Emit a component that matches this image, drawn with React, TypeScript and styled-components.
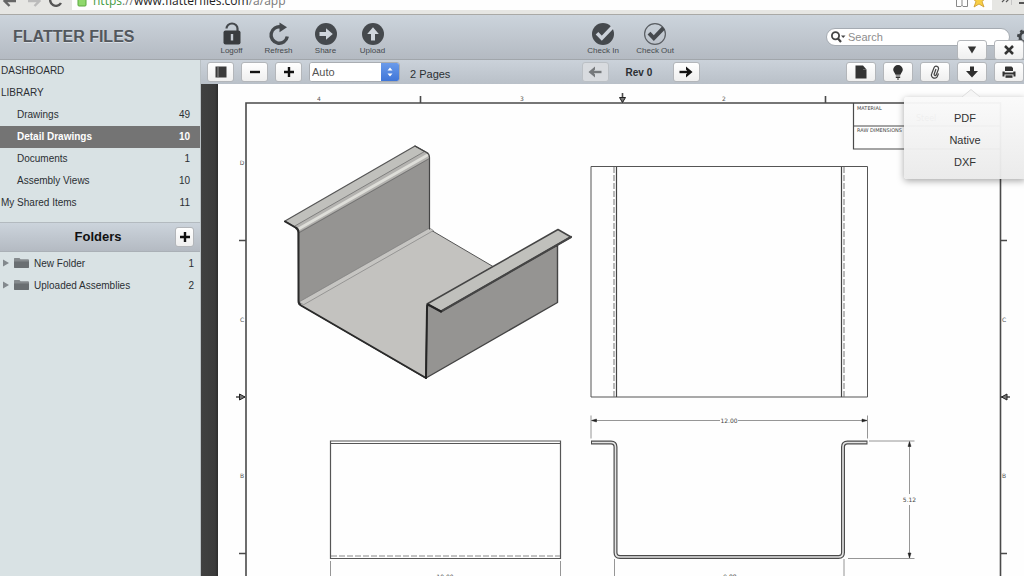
import React from "react";
import styled, { createGlobalStyle, css } from "styled-components";

const GlobalStyle = createGlobalStyle`
  * { box-sizing: border-box; }
  body {
    margin: 0;
    overflow: hidden;
    font-family: "Liberation Sans", Arial, sans-serif;
    font-size: 10px;
    color: #2b2f33;
    background: #fff;
  }
  button, input, select { font-family: inherit; margin: 0; }
`;

const barGradient = "linear-gradient(#ccd4dc, #b4bac2)";

const Page = styled.div`
  display: flex;
  flex-direction: column;
  height: 100vh;
  overflow: hidden;
`;

/* Browser strip */
const BrowserBar = styled.div`
  display: flex;
  align-items: flex-end;
  height: 15px;
  flex: none;
  overflow: hidden;
  padding-bottom: 4px;
  background: #e6e6e3;
  border-bottom: 1px solid #a9a9a6;
`;

const NavIcons = styled.div`
  display: flex;
  width: 72px;
  flex: none;
`;

const AddressBar = styled.div`
  display: flex;
  align-items: center;
  flex: 1;
  height: 24px;
  padding: 6px 3px 0 5px;
  background: #fefefe;
`;

const Address = styled.span`
  flex: 1;
  padding-left: 6px;
  font-family: "Open Sans", sans-serif;
  font-size: 12px;
  line-height: 16px;
  white-space: nowrap;
  color: #777;
  em { font-style: normal; color: #3f9a3f; }
  b { font-weight: 500; color: #222; }
`;

/* Application header */
const Header = styled.header`
  position: relative;
  z-index: 2;
  display: flex;
  align-items: center;
  flex: none;
  height: 45px;
  background: ${barGradient};
  border-bottom: 1px solid #a1a6ab;
`;

const Brand = styled.h1`
  width: 208px;
  flex: none;
  margin: 0;
  padding-left: 13px;
  font-size: 16px;
  line-height: 20px;
  color: #53575c;
  text-shadow: 0 1px 0 #d9dfe5;
`;

const ActionGroup = styled.div`
  display: flex;
  flex: none;
`;

const Spacer = styled.div<{ $grow: number }>`
  flex: ${(p) => p.$grow} 1 0;
`;

const Action = styled.button<{ $wide?: boolean }>`
  display: flex;
  flex-direction: column;
  align-items: center;
  width: ${(p) => (p.$wide ? 52 : 47)}px;
  padding: 4px 0 0;
  border: 0;
  background: none;
  color: #45494d;
  font-size: 8px;
  line-height: 10px;
  white-space: nowrap;
  svg { display: block; }
`;

const SearchField = styled.label`
  display: flex;
  align-items: center;
  flex: none;
  width: 184px;
  height: 18px;
  margin-right: 6px;
  padding-left: 4px;
  background: #fff;
  border: 1px solid #a5abb2;
  border-radius: 9px;
  input {
    flex: 1;
    min-width: 0;
    padding: 0 0 0 2px;
    border: 0;
    outline: 0;
    background: none;
    font-size: 11px;
    line-height: 14px;
    color: #333;
  }
  input::placeholder { color: #8d8d8d; opacity: 1; }
`;

const GearButton = styled.button`
  flex: none;
  width: 8px;
  height: 18px;
  padding: 0;
  border: 0;
  overflow: hidden;
  background: none;
  svg { display: block; }
`;

const buttonFace = css`
  display: flex;
  align-items: center;
  justify-content: center;
  flex: none;
  height: 20px;
  padding: 0;
  border: 1px solid #b3b6ba;
  border-radius: 3px;
  background: linear-gradient(#ffffff, #efefef);
  color: #111;
`;

const ToolButton = styled.button<{ $wide?: boolean; $faded?: boolean }>`
  ${buttonFace}
  width: ${(p) => (p.$wide ? 30 : 27)}px;
  svg { display: block; }
  ${(p) => p.$faded && css`
    background: #d8dbdf;
    border-color: #bbc0c5;
    color: #76797c;
  `}
`;

/* Window controls that hang over the lower edge of the header */
const FloatingControls = styled.div`
  position: absolute;
  right: 0;
  bottom: -1px;
  display: flex;
  gap: 7px;
`;

/* Body */
const Body = styled.div`
  display: flex;
  flex: 1;
  min-height: 0;
`;

const Sidebar = styled.nav`
  width: 201px;
  flex: none;
  background: #d9e2e4;
  border-right: 1px solid #b9c0c4;
`;

const List = styled.ul`
  margin: 0;
  padding: 0;
  list-style: none;
`;

const Entry = styled.a<{ $nested?: boolean; $active?: boolean }>`
  display: flex;
  align-items: center;
  justify-content: space-between;
  height: 22px;
  padding: 0 10px 2px ${(p) => (p.$nested ? 17 : 1)}px;
  color: #2b2f33;
  text-decoration: none;
  ${(p) => p.$active && css`
    background: #747474;
    color: #fff;
    font-weight: 700;
  `}
`;

const FolderHead = styled.div`
  display: grid;
  grid-template-columns: 1fr auto 1fr;
  align-items: center;
  height: 30px;
  margin-top: 8px;
  padding: 0 6px 0 2px;
  background: ${barGradient};
  border-top: 1px solid #b3babf;
  border-bottom: 1px solid #aab0b6;
  h2 {
    grid-column: 2;
    margin: 0;
    font-size: 13px;
    line-height: 16px;
    color: #111;
  }
  button {
    ${buttonFace}
    justify-self: end;
    width: 19px;
  }
`;

const FolderEntry = styled.a`
  display: flex;
  align-items: center;
  height: 22px;
  padding: 0 6px 0 2px;
  color: #2b2f33;
  text-decoration: none;
  svg { margin-right: 5px; }
  span { flex: 1; }
`;

const Main = styled.main`
  display: flex;
  flex-direction: column;
  flex: 1;
  min-width: 0;
`;

const Toolbar = styled.div`
  position: relative;
  z-index: 1;
  display: flex;
  align-items: center;
  flex: none;
  height: 24px;
  padding-left: 6px;
  background: linear-gradient(#cbd2da, #b9c0c8);
`;

const ZoomGroup = styled.div`
  display: flex;
  gap: 7px;
  align-items: center;
`;

const PageCount = styled.span`
  padding: 3px 0 0 3px;
  font-size: 11px;
  line-height: 14px;
`;

const Revision = styled.strong`
  width: 64px;
  text-align: center;
  line-height: 14px;
  padding: 2px 4px 0 0;
`;

const ZoomSelect = styled.div`
  display: flex;
  width: 91px;
  height: 20px;
  border: 1px solid #a9adb2;
  border-radius: 3px;
  overflow: hidden;
  background: #fff;
  select {
    flex: 1;
    min-width: 0;
    padding: 0 0 0 2px;
    border: 0;
    appearance: none;
    background: #fff;
    font-size: 11px;
    color: #555;
  }
  svg { flex: none; background: linear-gradient(#6b9bea, #3f76d8); }
`;

const Viewer = styled.div`
  flex: 1;
  min-height: 0;
  padding-left: 17px;
  overflow: hidden;
  background: linear-gradient(90deg, #404040 0, #3b3b3b 14px, #2c2c2c 17px);
`;

const Sheet = styled.svg`
  display: block;
  width: 100%;
  min-height: 100%;
  background: #fefefe;
  font-family: "DejaVu Sans", sans-serif;
`;

const ExportMenu = styled.div`
  position: absolute;
  top: 37px;
  right: -2px;
  width: 122px;
  padding: 10px 0 6px;
  border-radius: 3px;
  background: linear-gradient(rgba(250, 250, 250, 0.96), rgba(234, 234, 234, 0.96));
  box-shadow: 0 2px 7px rgba(0, 0, 0, 0.35);
  svg { position: absolute; top: -8px; left: 58px; }
  a {
    display: block;
    font-size: 11px;
    line-height: 22px;
    text-align: center;
    color: #333;
    text-decoration: none;
  }
`;

const LockIcon = () => (
  <svg width="24" height="24" viewBox="0 0 24 24">
    <path d="M6.500 6.500a5.500 5 0 0 1 11 0V9" fill="none" stroke="#45494d" strokeWidth="2.200" />
    <rect x="3.500" y="8.500" width="17" height="14" rx="2" fill="#393c3f" />
    <path d="M12 12v6.500" stroke="#c4cad2" strokeWidth="2.400" />
  </svg>
);

const RefreshIcon = () => (
  <svg width="24" height="24" viewBox="0 0 24 24">
    <path d="M20.300 14.500A8.200 8.200 0 1 1 14 5" fill="none" stroke="#45494d" strokeWidth="3.400" />
    <path d="M12.500 0.500L20 5.200l-7.500 5z" fill="#45494d" />
  </svg>
);

const DiscArrowIcon = ({ up }: { up?: boolean }) => (
  <svg width="24" height="24" viewBox="0 0 24 24">
    <circle cx="12" cy="12" r="11" fill="#45494d" />
    <path
      d="M5.500 10v4h6.500v3.800l6.800-5.800L12 6.200V10z"
      fill="#d0d6dd"
      transform={up ? "rotate(-90 12 12)" : undefined}
    />
  </svg>
);

const CheckInIcon = () => (
  <svg width="24" height="24" viewBox="0 0 24 24">
    <circle cx="12" cy="12" r="11" fill="#45494d" />
    <path d="M6 11.200l4.800 5L21.500 5" fill="none" stroke="#ccd2da" strokeWidth="3.600" />
  </svg>
);

const CheckOutIcon = () => (
  <svg width="24" height="24" viewBox="0 0 24 24">
    <circle cx="12" cy="12" r="10.400" fill="none" stroke="#5a5e63" strokeWidth="1.200" />
    <path d="M6 11.200l4.800 5L20.500 6" fill="none" stroke="#45494d" strokeWidth="4" />
  </svg>
);

const GearIcon = () => (
  <svg width="16" height="18" viewBox="0 0 16 18">
    <circle cx="9" cy="9" r="5" fill="none" stroke="#404448" strokeWidth="3" />
    <circle cx="9" cy="9" r="7" fill="none" stroke="#404448" strokeWidth="2" strokeDasharray="2.750 2.750" />
  </svg>
);

const FolderIcon = () => (
  <svg width="27" height="12" viewBox="0 0 27 12">
    <path d="M1 2.500l6 3.500-6 3.500z" fill="#83898d" />
    <path d="M12.500 1h5l1 1.200H26a1 1 0 0 1 1 1V10a1 1 0 0 1-1 1H13a1 1 0 0 1-1-1V1.500z" fill="#858a8d" />
    <path d="M12 4.500h15V10a1 1 0 0 1-1 1H13a1 1 0 0 1-1-1z" fill="#6a6f72" />
  </svg>
);

const ArrowIcon = ({ back }: { back?: boolean }) => (
  <svg width="14" height="12" viewBox="0 0 14 12">
    <path
      d="M0.500 6H9"
      stroke="currentColor"
      strokeWidth="2.400"
      transform={back ? "rotate(180 7 6)" : undefined}
    />
    <path
      d="M7 0.500l6.500 5.500L7 11.500V8.500L9 6 7 3.500z"
      fill="currentColor"
      transform={back ? "rotate(180 7 6)" : undefined}
    />
  </svg>
);

const PlusIcon = () => (
  <svg width="10" height="10" viewBox="0 0 10 10">
    <path d="M0 5h10M5 0v10" stroke="#111" strokeWidth="2.400" />
  </svg>
);

const MinusIcon = () => (
  <svg width="10" height="10" viewBox="0 0 10 10">
    <path d="M0 5h10" stroke="#111" strokeWidth="2.400" />
  </svg>
);

const PanelIcon = () => (
  <svg width="12" height="12" viewBox="0 0 12 12">
    <rect x="0.500" y="0.500" width="11" height="11" fill="#3b3b3b" />
    <path d="M3 1v10" stroke="#aaa" strokeWidth="0.800" />
  </svg>
);

const FileIcon = () => (
  <svg width="12" height="14" viewBox="0 0 12 14">
    <path d="M0.500 0.500h7.500v4h3.500v9H0.500z" fill="#333" />
    <path d="M8 0.500L11.500 4.500H8z" fill="#333" />
  </svg>
);

const BulbIcon = () => (
  <svg width="12" height="16" viewBox="0 0 12 16">
    <path d="M6 1a4.800 4.800 0 0 1 4.800 4.800c0 2-1.800 3-2.300 5h-5c-.5-2-2.300-3-2.300-5A4.800 4.800 0 0 1 6 1z" fill="#2f2f2f" />
    <path d="M3.800 12h4.400M3.800 13.500h4.400M5 15h2" stroke="#333" strokeWidth="1" />
  </svg>
);

const ClipIcon = () => (
  <svg width="12" height="14" viewBox="0 0 12 14">
    <path
      d="M7 4L5.200 9a1.100 1.100 0 0 0 2 .9L9.400 4.200A2.300 2.300 0 0 0 5.100 2.600L2.700 8.800a3 3 0 0 0 5.600 2.600l1.200-2.800"
      fill="none"
      stroke="#444"
      strokeWidth="1.200"
    />
  </svg>
);

const DownIcon = () => (
  <svg width="12" height="12" viewBox="0 0 12 12">
    <path d="M4 0.500h4V5h4l-6 6.500L0 5h4z" fill="#2f2f2f" />
  </svg>
);

const PrintIcon = () => (
  <svg width="14" height="12" viewBox="0 0 14 12">
    <path d="M3.500 0.500h6l1.500 1.500v3h-8V1z" fill="#333" />
    <path d="M0.500 5.500h2.200v1h8.600v-1h2.200v5h-2V8.500h-9v2h-2z" fill="#333" />
    <path d="M3.500 9.300h7v2.500h-7z" fill="#333" />
  </svg>
);

const CaretIcon = () => (
  <svg width="10" height="8" viewBox="0 0 10 8">
    <path d="M0.800 0.500h8.400L5 7.500z" fill="#333" />
  </svg>
);

const CloseIcon = () => (
  <svg width="10" height="10" viewBox="0 0 10 10">
    <path d="M1 1l8 8M9 1L1 9" stroke="#333" strokeWidth="2.500" />
  </svg>
);

const libraryItems = [
  { name: "DASHBOARD" },
  { name: "LIBRARY" },
  { name: "Drawings", count: 49, nested: true },
  { name: "Detail Drawings", count: 10, nested: true, active: true },
  { name: "Documents", count: 1, nested: true },
  { name: "Assembly Views", count: 10, nested: true },
  { name: "My Shared Items", count: 11 },
];

const folders = [
  { name: "New Folder", count: 1 },
  { name: "Uploaded Assemblies", count: 2 },
];

const DrawingSheet = () => (
  <Sheet viewBox="218 84 806 492" preserveAspectRatio="xMinYMin meet" role="img" aria-label="Detail drawing">
    {/* Border with zone marks */}
    <g fill="none" stroke="#4a4a4a" strokeWidth="1.600">
      <path d="M246 580V103H1000.500V580" />
      <path d="M420.500 96v7M825.500 96v7M239 240.500h7M239 553.500h7M1001 240.500h6M1001 553.500h6" />
      <path d="M622.500 93v9M236 397h9M1001 397h9" />
      <path d="M853.500 103v46H1000M853.500 126H1000" strokeWidth="1.200" />
    </g>
    <g fill="#777" stroke="#222" strokeWidth="1">
      <path d="M619.500 97.500h6l-3 5zM239.500 394l5.500 3-5.500 3zM1007 394l-5.500 3 5.500 3z" />
    </g>
    <g fill="#555" fontSize="6" textAnchor="middle">
      <text x="319" y="101">4</text>
      <text x="522" y="101">3</text>
      <text x="724" y="101">2</text>
      <text x="242" y="165">D</text>
      <text x="242" y="322">C</text>
      <text x="242" y="478">B</text>
      <text x="1004" y="322">C</text>
      <text x="1004" y="478">B</text>
    </g>
    <g fill="#444" fontSize="5">
      <text x="857" y="110">MATERIAL</text>
      <text x="857" y="132">RAW DIMENSIONS</text>
      <text x="916" y="121" fontSize="8">Steel</text>
    </g>

    {/* Isometric view */}
    <g strokeLinejoin="round" strokeLinecap="round">
      <path d="M299 304L430 229.500 493 266.500 427 305 426 378z" fill="#c3c2bf" stroke="#555" strokeWidth="1" />
      <path d="M298.500 231L429.500 157V229.500L299 303z" fill="#959492" stroke="#555" strokeWidth="1" />
      <path d="M299 302L429.500 228l4 2.500L304 304.500z" fill="#c6c5c2" stroke="#777" strokeWidth="0.600" />
      <path d="M285 221L415 146l13.500 7.500L298 229z" fill="#c0c0bc" stroke="#555" strokeWidth="1.200" />
      <path d="M294 226.500L424.500 151.500q5 .5 5 6.500L299.500 231.500q-1-4-5.500-5z" fill="#b4b3b0" />
      <path d="M297.500 229.500L428.500 154.500" stroke="#deded9" strokeWidth="2.600" />
      <path d="M294 226.500L424.500 151.500M299.500 232.500L429.500 158.500" stroke="#666" strokeWidth="0.700" />
      <path d="M415 146l11.500 6.500q3 1.500 3 5V229" fill="none" stroke="#444" strokeWidth="1.200" />
      <path d="M285 221.500l10.500 6q3 1.500 3 5V301q0 3 2.500 4.500L426 378" fill="none" stroke="#2a2a2a" strokeWidth="2" />
      <path d="M427 305L557.500 245V302.500L426 378z" fill="#959492" stroke="#444" strokeWidth="1.400" />
      <path d="M427 304L558 229.500l13 7.500L441 311.500z" fill="#c0c0bc" stroke="#444" strokeWidth="1.500" />
      <path d="M441 311.500L571 237" stroke="#444" strokeWidth="2.200" />
      <path d="M441 311.500l-13-7q-1 1-1 4L426 378" fill="none" stroke="#252525" strokeWidth="2" />
    </g>

    {/* Top view */}
    <g fill="none" stroke="#555" strokeWidth="1">
      <path d="M591 166.500H867.500V397H591z" />
      <path d="M616.500 167v230M841.500 167v230" stroke="#444" strokeWidth="1.200" />
      <path d="M614 167v230M844 167v230" stroke="#777" strokeDasharray="6 2" />
    </g>

    {/* Side view */}
    <g fill="none" stroke="#555" strokeWidth="1.200">
      <path d="M330.500 441H560.500V558.500H330.500zM330.500 443.500H560.500" />
      <path d="M331 556H560" stroke="#888" strokeWidth="1" strokeDasharray="6 2" />
    </g>

    {/* Profile view */}
    <path
      d="M591 442.500H611q4.500 0 4.500 4.500V552.500q0 4.500 4.500 4.500H838.500q4.500 0 4.500-4.500V447q0-4.500 4.500-4.500H867.500"
      fill="none"
      stroke="#4c4c4c"
      strokeWidth="4"
    />
    <path
      d="M592 442.500H611q4.500 0 4.500 4.500V552.500q0 4.500 4.500 4.500H838.500q4.500 0 4.500-4.500V447q0-4.500 4.500-4.500H866.500"
      fill="none"
      stroke="#e4e4e4"
      strokeWidth="1.600"
    />

    {/* Dimensions */}
    <g fill="none" stroke="#8a8a8a" strokeWidth="0.900">
      <path d="M591 415.500v23M867.500 415.500v23M592 420.500H720M738 420.500H867" />
      <path d="M869 441H914.500M848 558.500H914.500M909.500 442V494M909.500 505V558" />
      <path d="M614.500 559v20M844 559v20M330.500 561v20M560.500 561v20" />
    </g>
    <path
      d="M591.500 420.500l5-1.500v3zM867 420.500l-5-1.500v3zM909.500 441.500l-1.500 5h3zM909.500 558l-1.500-5h3z"
      fill="#222"
      stroke="#222"
      strokeWidth="0.500"
    />
    <g fill="#444" fontSize="6" textAnchor="middle">
      <text x="729" y="423">12.00</text>
      <text x="909.500" y="502">5.12</text>
      <text x="445" y="579">10.00</text>
      <text x="730" y="579">9.88</text>
    </g>
  </Sheet>
);

export default function App() {
  return (
    <Page>
      <GlobalStyle />
      <BrowserBar>
        <NavIcons>
          <svg width="72" height="11" viewBox="0 0 72 11" fill="none">
            <path d="M4 2H16M10-4L4.500 2l5 5" stroke="#666" strokeWidth="2.400" />
            <path d="M28 2H40M34-4l5.500 6-5 5" stroke="#bbb" strokeWidth="2.400" />
            <path d="M51-2a5.500 5.500 0 0 0 10 6" stroke="#555" strokeWidth="2.400" />
          </svg>
        </NavIcons>
        <AddressBar>
          <svg width="10" height="20" viewBox="0 0 10 20">
            <rect x="1" y="5" width="8" height="10" rx="1" fill="#8fd86c" stroke="#58a83c" />
          </svg>
          <Address>
            <em>https</em>://<b>www.flatterfiles.com</b>/a/app
          </Address>
          <svg width="34" height="20" viewBox="0 0 34 20">
            <path d="M1.500 3v12.500h4.500l1-1 1 1h4.500V3M7 3v12" fill="none" stroke="#888" />
            <path d="M24 2l2 5h5l-4 3.500 2 5.500-5-3-5 3 2-5.500L17 7h5z" fill="#f8cf45" stroke="#c9972b" strokeWidth="0.800" />
          </svg>
        </AddressBar>
        <svg width="32" height="11" viewBox="0 0 32 11">
          <path d="M10-2l2.500 2.500L10 3M14-2l2.500 2.500L14 3" fill="none" stroke="#555" strokeWidth="1.200" />
          <path d="M19.500 0v6" stroke="#c6c6c6" />
          <path d="M27 0h8M27 4h8" stroke="#555" strokeWidth="2" />
        </svg>
      </BrowserBar>

      <Header>
        <Brand>FLATTER FILES</Brand>
        <ActionGroup>
          <Action><LockIcon />Logoff</Action>
          <Action><RefreshIcon />Refresh</Action>
          <Action><DiscArrowIcon />Share</Action>
          <Action><DiscArrowIcon up />Upload</Action>
        </ActionGroup>
        <Spacer $grow={5} />
        <ActionGroup>
          <Action $wide><CheckInIcon />Check In</Action>
          <Action $wide><CheckOutIcon />Check Out</Action>
        </ActionGroup>
        <Spacer $grow={4} />
        <SearchField>
          <svg width="15" height="12" viewBox="0 0 15 12">
            <circle cx="4.500" cy="4.800" r="3.600" fill="none" stroke="#444" strokeWidth="1.800" />
            <path d="M7 7.500l3 3.500" stroke="#444" strokeWidth="2.200" />
            <path d="M10 4.500h4.500L12.200 7z" fill="#444" />
          </svg>
          <input type="search" placeholder="Search" aria-label="Search" />
        </SearchField>
        <GearButton aria-label="Settings"><GearIcon /></GearButton>
        <FloatingControls>
          <ToolButton $wide aria-label="Show menu"><CaretIcon /></ToolButton>
          <ToolButton $wide aria-label="Close"><CloseIcon /></ToolButton>
        </FloatingControls>
      </Header>

      <Body>
        <Sidebar>
          <List>
            {libraryItems.map((item) => (
              <li key={item.name}>
                <Entry href="#" $nested={item.nested} $active={item.active}>
                  <span>{item.name}</span>
                  <span>{item.count}</span>
                </Entry>
              </li>
            ))}
          </List>
          <FolderHead>
            <h2>Folders</h2>
            <button aria-label="Add folder"><PlusIcon /></button>
          </FolderHead>
          <List>
            {folders.map((folder) => (
              <li key={folder.name}>
                <FolderEntry href="#">
                  <FolderIcon />
                  <span>{folder.name}</span>
                  {folder.count}
                </FolderEntry>
              </li>
            ))}
          </List>
        </Sidebar>

        <Main>
          <Toolbar>
            <ZoomGroup>
              <ToolButton aria-label="Toggle sidebar"><PanelIcon /></ToolButton>
              <ToolButton aria-label="Zoom out"><MinusIcon /></ToolButton>
              <ToolButton aria-label="Zoom in"><PlusIcon /></ToolButton>
              <ZoomSelect>
                <select aria-label="Zoom level" defaultValue="Auto">
                  <option>Auto</option>
                </select>
                <svg width="18" height="18" viewBox="0 0 18 18">
                  <path d="M6.500 7.500L9 4.500l2.500 3zM6.500 10.500L9 13.500l2.500-3z" fill="#fff" />
                </svg>
              </ZoomSelect>
              <PageCount>2 Pages</PageCount>
            </ZoomGroup>
            <Spacer $grow={9} />
            <ToolButton $faded aria-label="Previous revision"><ArrowIcon back /></ToolButton>
            <Revision>Rev 0</Revision>
            <ToolButton aria-label="Next revision"><ArrowIcon /></ToolButton>
            <Spacer $grow={10} />
            <ZoomGroup>
              <ToolButton $wide aria-label="File"><FileIcon /></ToolButton>
              <ToolButton $wide aria-label="Hints"><BulbIcon /></ToolButton>
              <ToolButton $wide aria-label="Attachments"><ClipIcon /></ToolButton>
              <ToolButton $wide aria-label="Download"><DownIcon /></ToolButton>
              <ToolButton $wide aria-label="Print"><PrintIcon /></ToolButton>
            </ZoomGroup>
            <ExportMenu>
              <svg width="18" height="8" viewBox="0 0 18 8">
                <path d="M0 8L9 0l9 8z" fill="#f6f6f6" />
                <path d="M0 8L9 0.500 18 8" fill="none" stroke="#ddd" />
              </svg>
              <a href="#">PDF</a>
              <a href="#">Native</a>
              <a href="#">DXF</a>
            </ExportMenu>
          </Toolbar>
          <Viewer>
            <DrawingSheet />
          </Viewer>
        </Main>
      </Body>
    </Page>
  );
}
